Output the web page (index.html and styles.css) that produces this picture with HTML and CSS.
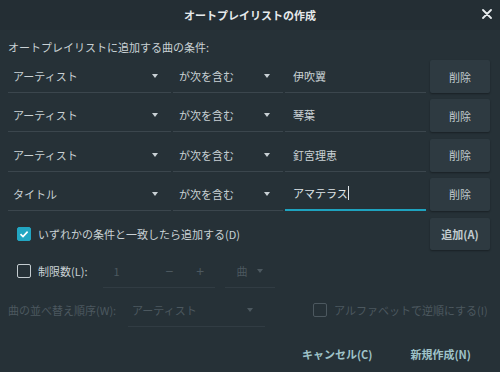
FILE: index.html
```html
<!DOCTYPE html>
<html lang="ja">

<head>
    <meta charset="UTF-8">
    <meta name="viewport" content="width=device-width, initial-scale=1.0">
    <title>オートプレイリストの作成</title>
    <link rel="stylesheet" href="styles.css">
</head>

<body>
    <div class="dialog">
        <header class="titlebar">
            <span class="title">オートプレイリストの作成</span>
            <svg class="close" width="10" height="10" viewBox="0 0 10 10">
                <path d="M1 1 L9 9 M9 1 L1 9" stroke="#e8ecee" stroke-width="1.8" stroke-linecap="round" />
            </svg>
        </header>

        <main class="content">
            <p class="caption">オートプレイリストに追加する曲の条件:</p>

            <div class="rules">
                <div class="rule">
                    <div class="combo field">アーティスト<span class="arrow"></span></div>
                    <div class="combo match">が次を含む<span class="arrow"></span></div>
                    <div class="entry">伊吹翼</div>
                    <button class="btn remove">削除</button>
                </div>
                <div class="rule">
                    <div class="combo field">アーティスト<span class="arrow"></span></div>
                    <div class="combo match">が次を含む<span class="arrow"></span></div>
                    <div class="entry">琴葉</div>
                    <button class="btn remove">削除</button>
                </div>
                <div class="rule">
                    <div class="combo field">アーティスト<span class="arrow"></span></div>
                    <div class="combo match">が次を含む<span class="arrow"></span></div>
                    <div class="entry">釘宮理恵</div>
                    <button class="btn remove">削除</button>
                </div>
                <div class="rule">
                    <div class="combo field">タイトル<span class="arrow"></span></div>
                    <div class="combo match">が次を含む<span class="arrow"></span></div>
                    <div class="entry active">アマテラス<span class="caret"></span></div>
                    <button class="btn remove">削除</button>
                </div>
            </div>

            <div class="any-row">
                <label class="check">
                    <span class="box checked">
                        <svg width="10" height="10" viewBox="0 0 10 10">
                            <path d="M1.5 5.2 L4 7.6 L8.6 2.6" fill="none" stroke="#fff" stroke-width="1.6" />
                        </svg>
                    </span>
                    いずれかの条件と一致したら追加する(D)
                </label>
                <button class="btn add">追加(A)</button>
            </div>

            <div class="limit-row">
                <label class="check">
                    <span class="box"></span>
                    制限数(L):
                </label>
                <div class="spin">
                    <span class="spin-value">1</span>
                    <span class="spin-btn">−</span>
                    <span class="spin-btn">+</span>
                </div>
                <div class="combo unit disabled">曲<span class="arrow"></span></div>
            </div>

            <div class="sort-row">
                <span class="sort-label">曲の並べ替え順序(W):</span>
                <div class="combo sort disabled">アーティスト<span class="arrow"></span></div>
                <label class="check disabled">
                    <span class="box"></span>
                    アルファベットで逆順にする(I)
                </label>
            </div>

            <footer class="actions">
                <button class="flat">キャンセル(C)</button>
                <button class="flat">新規作成(N)</button>
            </footer>
        </main>
    </div>
</body>

</html>
```

FILE: styles.css
```css
* {
    margin: 0;
    padding: 0;
    box-sizing: border-box;
}

body {
    width: 500px;
    height: 372px;
    background-color: #263137;
    font-family: "Noto Sans CJK JP", "Noto Sans", sans-serif;
    font-size: 11px;
    color: #c9d1d5;
    overflow: hidden;
}

.titlebar {
    height: 30px;
    background-color: #242e34;
    display: flex;
    align-items: center;
    justify-content: center;
    position: relative;
}

.title {
    font-weight: bold;
    color: #e6eaec;
}

.close {
    position: absolute;
    right: 8px;
    top: 9px;
}

.content {
    padding: 9px 10px 0 8px;
}

.caption {
    line-height: 16px;
    margin-bottom: 5px;
}

.rules {
    display: flex;
    flex-direction: column;
    gap: 6.3px;
}

.rule {
    display: flex;
    height: 33px;
}

.combo,
.entry {
    display: flex;
    align-items: center;
    border-bottom: 1px solid #3b464d;
    position: relative;
}

.combo.field {
    width: 163px;
    padding-left: 5px;
}

.combo.match {
    width: 110px;
    margin-left: 2px;
    padding-left: 6px;
}

.arrow {
    position: absolute;
    right: 13px;
    top: 50%;
    margin-top: -2px;
    border-left: 3.5px solid transparent;
    border-right: 3.5px solid transparent;
    border-top: 4px solid #c9d1d5;
}

.entry {
    width: 141px;
    margin-left: 2px;
    padding-left: 8px;
}

.entry.active {
    border-bottom: 2px solid #1ea3bf;
    color: #dfe5e8;
}

.caret {
    display: inline-block;
    width: 1px;
    height: 14px;
    background-color: #dfe5e8;
}

.btn {
    font-family: inherit;
    font-size: 11px;
    color: #c2cbd0;
    background-color: #2e3a41;
    border: none;
    border-radius: 2px;
    box-shadow: 0 1px 2px rgba(0, 0, 0, 0.35);
}

.btn.remove {
    width: 60px;
    margin-left: 4px;
}

.any-row {
    display: flex;
    align-items: center;
    justify-content: space-between;
    margin-top: 7px;
    height: 32px;
}

.btn.add {
    width: 60px;
    height: 32px;
    font-weight: bold;
}

.check {
    display: flex;
    align-items: center;
    gap: 7px;
    padding-left: 9px;
}

.box {
    width: 14px;
    height: 14px;
    border: 1.5px solid #c4ccd0;
    border-radius: 2px;
    display: flex;
    align-items: center;
    justify-content: center;
}

.box.checked {
    background-color: #22a6c2;
    border-color: #22a6c2;
}

.check.disabled {
    color: #4c585f;
}

.check.disabled .box {
    border-color: #4c585f;
}

.limit-row {
    display: flex;
    align-items: center;
    height: 33px;
    margin-top: 5px;
}

.spin {
    display: flex;
    align-items: center;
    width: 112px;
    height: 33px;
    margin-left: 16px;
    border-bottom: 1px solid #313c43;
    color: #4c585f;
}

.spin-value {
    width: 52px;
    padding-left: 10px;
}

.spin-btn {
    width: 32px;
    font-size: 14px;
    text-align: center;
}

.combo.unit {
    width: 50px;
    height: 33px;
    margin-left: 10px;
    padding-left: 11px;
    border-bottom-color: #313c43;
}

.combo.disabled {
    color: #4c585f;
}

.combo.disabled .arrow {
    border-top-color: #4c585f;
    right: 12px;
}

.sort-row {
    display: flex;
    align-items: center;
    height: 33px;
    margin-top: 6px;
}

.sort-label {
    color: #4c585f;
    width: 120px;
}

.combo.sort {
    width: 137px;
    height: 33px;
    padding-left: 4px;
    border-bottom-color: #313c43;
}

.sort-row .check {
    padding-left: 48px;
}

.actions {
    display: flex;
    justify-content: flex-end;
    margin-top: 11px;
    height: 32px;
}

.flat {
    font-family: inherit;
    font-size: 11px;
    font-weight: bold;
    color: #9fc3c9;
    background: none;
    border: none;
    padding: 0 19px;
}
```
